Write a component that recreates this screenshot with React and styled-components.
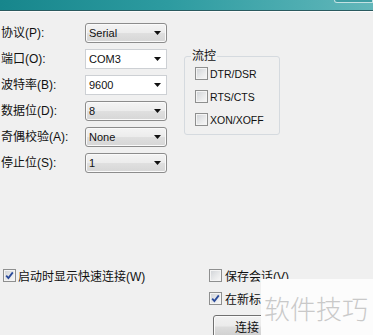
// Imports
import React from "react";
import styled, { createGlobalStyle } from "styled-components";

// Data
const fields = [
	{ label: "协议", key: "(P):", value: "Serial", editable: false },
	{ label: "端口", key: "(O):", value: "COM3", editable: true },
	{ label: "波特率", key: "(B):", value: "9600", editable: true },
	{ label: "数据位", key: "(D):", value: "8", editable: false },
	{ label: "奇偶校验", key: "(A):", value: "None", editable: false },
	{ label: "停止位", key: "(S):", value: "1", editable: false }
];

const flowOptions = ["DTR/DSR", "RTS/CTS", "XON/XOFF"];

// Small parts
const Arrow = () => (
	<svg width="7" height="4" viewBox="0 0 7 4">
		<polygon points="0,0 7,0 3.5,4" fill="#111" />
	</svg>
);

const Check = ({ checked }) => (
	<Box>
		{checked && (
			<svg width="9" height="9" viewBox="0 0 9 9">
				<path d="M1.2 4.6 L3.4 7 L7.8 1.4" fill="none" stroke="#2a4a9a" strokeWidth="1.8" />
			</svg>
		)}
	</Box>
);

// Component
const App = () => {
	return (
		<>
			<GlobalStyle />
			<Window>
				<TitleBar>
					<TitleText>速连接</TitleText>
					<TitleButton />
				</TitleBar>

				<Content>
					<FormGrid>
						{fields.map((f) => (
							<React.Fragment key={f.label}>
								<Label>{f.label}{f.key}</Label>
								<Select $editable={f.editable}>
									<span>{f.value}</span>
									<Arrow />
								</Select>
							</React.Fragment>
						))}
					</FormGrid>

					<GroupBox>
						<Legend>流控</Legend>
						<GroupList>
							{flowOptions.map((o) => (
								<CheckRow key={o} $latin>
									<Check />
									<span>{o}</span>
								</CheckRow>
							))}
						</GroupList>
					</GroupBox>
				</Content>

				<Bottom>
					<BottomLeft>
						<CheckRow>
							<Check checked />
							<span>启动时显示快速连接(W)</span>
						</CheckRow>
					</BottomLeft>
					<BottomRight>
						<CheckRow $gap={3}>
							<Check />
							<span>保存会话(V)</span>
						</CheckRow>
						<CheckRow $gap={3}>
							<Check checked />
							<span>在新标签页中打开(O)</span>
						</CheckRow>
						<Button>连接</Button>
					</BottomRight>
				</Bottom>

				<Watermark>软件技巧</Watermark>
			</Window>
		</>
	);
};

// Styled
const GlobalStyle = createGlobalStyle`
	body{
		margin: 0;
		background: #f0f0f0;
		font-family: "Liberation Sans", "Noto Sans CJK SC", sans-serif;
	}
`;

const Window = styled.div`
	position: relative;
	width: 373px;
	height: 335px;
	overflow: hidden;
	background: #f0f0f0;
	display: flex;
	flex-direction: column;
	color: #111;
`;

const TitleBar = styled.div`
	height: 10px;
	flex-shrink: 0;
	display: flex;
	justify-content: space-between;
	align-items: flex-start;
	overflow: hidden;
	background: linear-gradient(90deg, #17868c 0%, #2d9ba0 45%, #4eadb1 80%, #63b7ba 100%);
	border-bottom: 1px solid #2a5a5f;
	box-shadow: 0 1px 0 #fcfcfc;
`;

const TitleText = styled.span`
	margin-top: -16px;
	font-size: 14px;
	line-height: 16px;
	color: #0c2a2c;
`;

const TitleButton = styled.div`
	width: 37px;
	height: 2px;
	border: 1px solid #c3e2e3;
	border-top: none;
	border-radius: 0 0 0 3px;
	background: #3f9ea3;
`;

const Content = styled.div`
	display: flex;
	align-items: flex-start;
	padding: 12px 0 0 1px;
`;

const FormGrid = styled.div`
	display: grid;
	grid-template-columns: 84px 82px;
	grid-auto-rows: 20px;
	row-gap: 6px;
	align-items: center;
`;

const Label = styled.span`
	font-size: 12px;
	line-height: 20px;
	white-space: nowrap;
`;

const Select = styled.div`
	box-sizing: border-box;
	height: 20px;
	display: flex;
	align-items: center;
	justify-content: space-between;
	padding: 0 5px 0 3px;
	font-size: 11px;
	border: 1px solid ${(p) => (p.$editable ? "#cdd0d4" : "#8c8c8c")};
	border-radius: ${(p) => (p.$editable ? "0" : "3px")};
	background: ${(p) =>
		p.$editable
			? "#ffffff"
			: "linear-gradient(180deg, #f4f4f4 0%, #ececec 48%, #dfdfdf 52%, #d6d6d6 100%)"};
	box-shadow: ${(p) => (p.$editable ? "none" : "inset 0 0 0 1px #fafafa")};
`;

const GroupBox = styled.div`
	position: relative;
	box-sizing: border-box;
	width: 96px;
	height: 79px;
	margin: 33px 0 0 17px;
	border: 1px solid #d5dadf;
	border-radius: 3px;
	padding: 10px 0 0 10px;
`;

const Legend = styled.span`
	position: absolute;
	top: -7px;
	left: 6px;
	padding: 0 1px;
	font-size: 12px;
	line-height: 12px;
	background: #f0f0f0;
`;

const GroupList = styled.div`
	display: flex;
	flex-direction: column;
	gap: 10px;
`;

const CheckRow = styled.label`
	display: flex;
	align-items: center;
	gap: ${(p) => (p.$gap ? p.$gap : 2)}px;
	height: ${(p) => (p.$latin ? "13px" : "16px")};
	font-size: ${(p) => (p.$latin ? "10.5px" : "12px")};
	white-space: nowrap;
`;

const Box = styled.span`
	box-sizing: border-box;
	width: 13px;
	height: 13px;
	flex-shrink: 0;
	display: flex;
	align-items: center;
	justify-content: center;
	border: 1px solid #8e8f8f;
	background: linear-gradient(135deg, #cfd2d6 0%, #eaebec 60%, #f8f8f8 100%);
	box-shadow: inset 0 0 0 1px #f4f4f4;
`;

const Bottom = styled.div`
	display: grid;
	grid-template-columns: 206px 1fr;
	margin-top: 94px;
`;

const BottomLeft = styled.div`
	padding-left: 3px;
`;

const BottomRight = styled.div`
	display: flex;
	flex-direction: column;
	align-items: flex-start;
	gap: 7px;
	padding-left: 3px;
`;

const Button = styled.button`
	box-sizing: border-box;
	width: 68px;
	height: 23px;
	margin: 2px 0 0 4px;
	padding: 0;
	font: inherit;
	font-size: 12px;
	color: #111;
	border: 1px solid #707070;
	border-radius: 3px;
	background: linear-gradient(180deg, #f2f2f2 0%, #ebebeb 48%, #dddddd 52%, #cfcfcf 100%);
	box-shadow: inset 0 0 0 1px #fbfbfb;
`;

const Watermark = styled.div`
	position: absolute;
	right: 0;
	bottom: 0;
	width: 112px;
	height: 56px;
	display: flex;
	align-items: center;
	padding-left: 3px;
	box-sizing: border-box;
	background: #fcfcfc;
	color: #c9c9c9;
	font-family: "Noto Sans CJK SC", sans-serif;
	font-weight: 300;
	font-size: 26px;
	white-space: nowrap;
`;

// Export
export default App;
